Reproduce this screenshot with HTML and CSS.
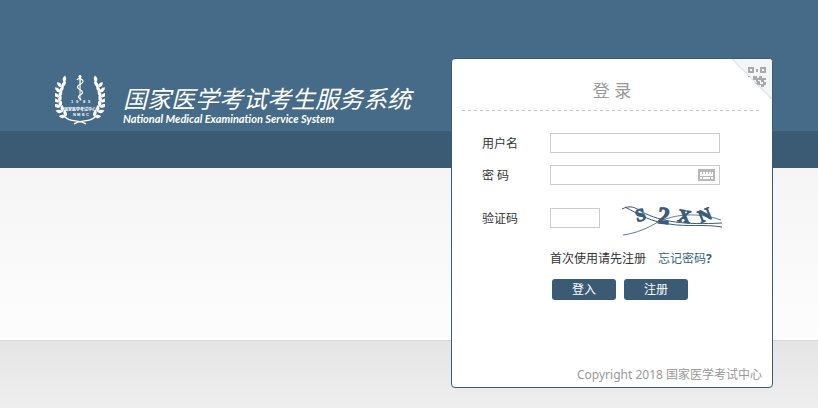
FILE: index.html
```html
<!DOCTYPE html>
<html lang="zh-CN">
<head>
<meta charset="utf-8">
<meta name="viewport" content="width=device-width, initial-scale=1">
<title>国家医学考试考生服务系统</title>
<link rel="stylesheet" href="styles.css">
</head>
<body>
<main class="page">
  <header class="brand">
    <svg class="emblem" viewBox="4 4 50 52" aria-hidden="true">
      <defs>
        <path id="leaf" d="M.4 .4C-3.200 0-4.400-2.400-3.800-5.400C-.6-4.600 1-2.400.4.4Z"/>
        <g id="branch">
          <use href="#leaf" transform="translate(13 12) rotate(45)"/>
          <use href="#leaf" transform="translate(10.500 17) rotate(-5)"/>
          <use href="#leaf" transform="translate(11 16.500) rotate(72)"/>
          <use href="#leaf" transform="translate(8.800 22) rotate(-10)"/>
          <use href="#leaf" transform="translate(9.200 21.500) rotate(68)"/>
          <use href="#leaf" transform="translate(7.800 27) rotate(-16)"/>
          <use href="#leaf" transform="translate(8.200 26.500) rotate(62)"/>
          <use href="#leaf" transform="translate(7.600 32) rotate(-22)"/>
          <use href="#leaf" transform="translate(8 31.500) rotate(54)"/>
          <use href="#leaf" transform="translate(8.600 37) rotate(-32)"/>
          <use href="#leaf" transform="translate(9 36.500) rotate(44)"/>
          <use href="#leaf" transform="translate(11 42) rotate(-42)"/>
          <use href="#leaf" transform="translate(11.500 41.500) rotate(32)"/>
          <use href="#leaf" transform="translate(14.500 46.500) rotate(-52)"/>
          <use href="#leaf" transform="translate(15 46) rotate(20)"/>
          <path d="M14 47C20 53 27 49 35 54" fill="none" stroke="currentColor" stroke-width="1.300"/>
        </g>
      </defs>
      <g fill="currentColor">
        <use href="#branch"/>
        <use href="#branch" transform="translate(58 0) scale(-1 1)"/>
        <circle cx="29" cy="6.500" r="1.500"/>
        <path d="M28.300 7H29.800L29.400 31H28.700Z"/>
        <path d="M26 10C27 7.500 32 9 32 11.500C32 14.500 26.500 14 26.500 17C26.500 20 31.500 19.500 31.500 22.500C31.500 25 27.500 24.500 27.500 27C27.500 28.500 29.500 28.500 30 30" fill="none" stroke="currentColor" stroke-width="1.300"/>
        <text x="20 25 32 37" y="33">1985</text>
        <text x="29" y="41" text-anchor="middle">国家医学考试中心</text>
        <text x="22 26 31 35" y="46">NMEC</text>
      </g>
    </svg>
    <div class="brand-text">
      <h1 class="brand-title">国家医学考试考生服务系统</h1>
      <p class="brand-subtitle">National Medical Examination Service System</p>
    </div>
  </header>

  <section class="card">
    <button class="qr-toggle" type="button" aria-label="QR">
      <svg viewBox="0 0 40 40" aria-hidden="true">
        <path d="M0 0H40V40Z" fill="#f4f5f7"/>
        <path d="M0 0L40 40" stroke="#e4e5e8" stroke-width="1.500"/>
        <g fill="none" stroke="#a9a9a9" stroke-width="2">
          <path d="M17 9H21V13H17ZM29 9H33V13H29Z"/>
        </g>
        <path fill="#a9a9a9" d="M24 10H26V13H24ZM16 17H18V18H16ZM21 17H25V19H27V17H30V19H34V21H32V23H29V21H26V23H24V21H21ZM23 24H25V22H28V25H31V23H34V26H32V28H29V26H26Z"/>
      </svg>
    </button>
    <h2 class="card-title">登 录</h2>
    <form class="login-form">
      <div class="row">
        <label class="label" for="user">用户名</label>
        <input class="field" id="user" type="text">
      </div>
      <div class="row">
        <label class="label" for="password">密 码</label>
        <div class="password">
          <input class="field" id="password" type="password">
          <svg class="keyboard" viewBox="0 0 17 12" aria-hidden="true">
            <path fill="#b8b8b8" d="M0 0H17V12H0Z"/>
            <path stroke="#fff" stroke-width="2" stroke-dasharray="2 1" d="M2 4H15"/>
            <path stroke="#fff" stroke-width="2" d="M2 6H15"/>
            <path stroke="#fff" stroke-width="2" d="M2 9H4M5 9H12M13 9H15"/>
          </svg>
        </div>
      </div>
      <div class="row row-captcha">
        <label class="label" for="captcha">验证码</label>
        <input class="field field-short" id="captcha" type="text">
        <svg class="captcha" viewBox="0 0 100 36" role="img" aria-label="验证码">
          <g class="captcha-text">
            <text transform="translate(15 22) rotate(-14)">S</text>
            <text class="captcha-big" transform="translate(35 23) rotate(6)">2</text>
            <text transform="translate(55 21) rotate(10)">X</text>
            <text transform="translate(79 23) rotate(-22)">N</text>
          </g>
          <g fill="none" stroke="#3b5b78">
            <path d="M0 9C8 5 13 7 20 12C40 22 62 25 100 23"/>
            <path d="M3 7C18 15 30 22 47 24C65 27 82 24 100 27"/>
            <path d="M1 35C15 33 26 28 36 22C53 14 76 12 99 20" stroke-width=".800"/>
          </g>
        </svg>
      </div>
      <p class="links"><span>首次使用请先注册</span><a href="#">忘记密码<b>?</b></a></p>
      <div class="actions">
        <button class="button" type="submit">登入</button>
        <button class="button" type="button">注册</button>
      </div>
    </form>
    <footer class="copyright">Copyright 2018 国家医学考试中心</footer>
  </section>
</main>
</body>
</html>
```

FILE: styles.css
```css
* {
  box-sizing: border-box;
}

html {
  min-height: 100%;
  background: linear-gradient(#e5e5e5, #eee);
}

body {
  margin: 0;
  color: #333;
  font: 12px/16px "Noto Sans", "Noto Sans CJK SC", sans-serif;
  background:
    linear-gradient(#466b88, #466b88) 0 0 / 100% 131px no-repeat,
    linear-gradient(#3b5a74, #3b5a74) 0 131px / 100% 37px no-repeat,
    linear-gradient(#f5f5f5, #fdfdfd) 0 168px / 100% 172px no-repeat,
    linear-gradient(#d8d8d8, #d8d8d8) 0 340px / 100% 1px no-repeat,
    linear-gradient(#e5e5e5, #eee) 0 341px / 100% 67px no-repeat;
}

h1,
h2,
p {
  margin: 0;
  font-weight: normal;
}

.page {
  display: flex;
  justify-content: space-between;
  align-items: flex-start;
  gap: 24px;
  padding: 58px 45px 20px 55px;
}

.brand {
  display: flex;
  gap: 18px;
  padding-top: 16px;
  color: #fff;
}

.emblem {
  flex: none;
  width: 50px;
  height: 52px;
}

.emblem text {
  font: bold 4px "Liberation Sans", "Noto Sans CJK SC", sans-serif;
}

.brand-text {
  padding-top: 12px;
  white-space: nowrap;
}

.brand-title {
  font-size: 24px;
  line-height: 26px;
  font-style: italic;
}

.brand-subtitle {
  font: italic 700 11px/14px Lato, sans-serif;
}

.card {
  position: relative;
  display: flex;
  flex-direction: column;
  flex: none;
  width: 322px;
  min-height: 330px;
  padding: 8px 10px 4px;
  background: #fff;
  border: 1px solid #3b5a74;
  border-radius: 4px;
}

.qr-toggle {
  position: absolute;
  top: 0;
  right: 0;
  width: 40px;
  height: 40px;
  padding: 0;
  background: none;
  border: 0;
  border-radius: 0 3px 0 0;
  overflow: hidden;
}

.qr-toggle svg {
  display: block;
}

.card-title {
  padding: 12px 0 8px;
  color: #999;
  font-size: 17px;
  line-height: 24px;
  text-align: center;
  background: repeating-linear-gradient(90deg, #c4c4c4 0 3px, transparent 3px 6px) 0 100% / 100% 1px no-repeat;
}

.login-form {
  display: grid;
  gap: 12px;
  padding: 22px 0 0 20px;
}

.row {
  display: flex;
  align-items: center;
}

.row-captcha {
  height: 42px;
}

.label {
  width: 68px;
  padding-top: 2px;
}

.field {
  display: block;
  width: 170px;
  height: 20px;
  padding: 0 4px;
  background: #fff;
  border: 1px solid #ccc;
}

.field-short {
  width: 50px;
}

.password {
  position: relative;
}

.keyboard {
  position: absolute;
  top: 4px;
  right: 5px;
  width: 17px;
  height: 12px;
}

.captcha {
  width: 100px;
  height: 36px;
  margin-left: 22px;
  overflow: visible;
}

.captcha-text {
  fill: #3b5b78;
  stroke: #3b5b78;
  stroke-width: 1px;
  font: bold 18px "Liberation Serif", serif;
}

.captcha-big {
  font-size: 24px;
}

.links {
  display: flex;
  gap: 12px;
  padding-left: 68px;
}

.links a {
  color: #3b5f7e;
  text-decoration: none;
}

.actions {
  display: flex;
  gap: 8px;
  padding-left: 70px;
}

.button {
  width: 64px;
  height: 21px;
  padding: 0;
  color: #fff;
  font: inherit;
  background: #3b5a74;
  border: 0;
  border-radius: 3px;
}

.copyright {
  margin-top: auto;
  color: #999;
  text-align: right;
}
```
